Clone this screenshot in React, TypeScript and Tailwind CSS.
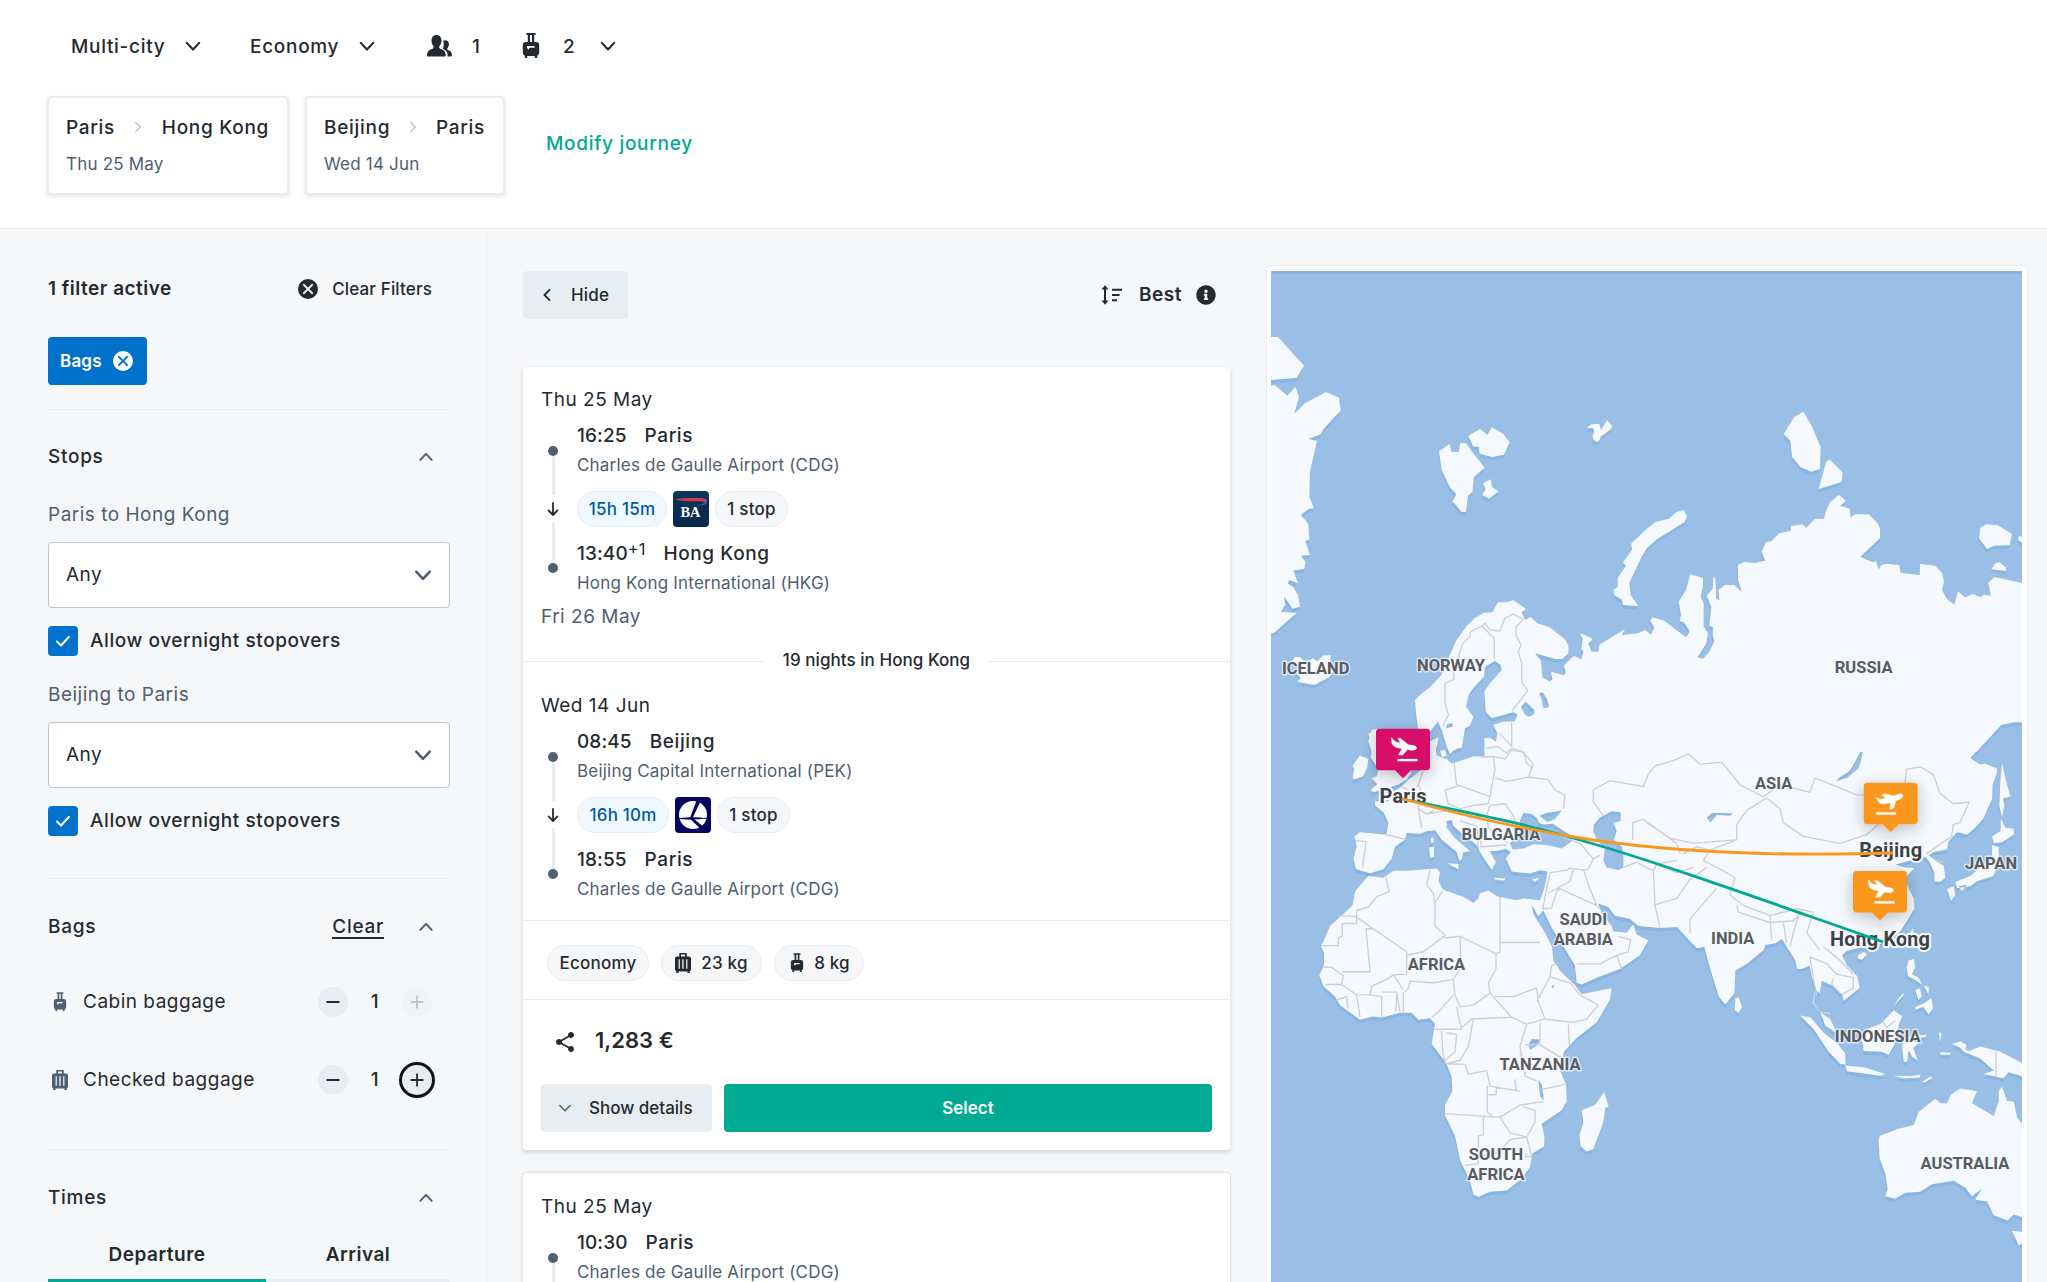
import React from "react";
import { FaInfoCircle } from "react-icons/fa";
import { MdShare } from "react-icons/md";

const t20 = "text-[19px] tracking-[0.5px] leading-none whitespace-nowrap";
const t20m = "text-[19px] font-medium tracking-[0.7px] leading-none whitespace-nowrap";
const t17 = "text-[17px] tracking-[0.2px] leading-none whitespace-nowrap";

function Chevron({ dir = "down", size = 24, w = 2.3, className = "" }: { dir?: "down" | "up" | "left" | "right"; size?: number; w?: number; className?: string }) {
  const d = {
    down: "M5.2 8.6 12 15.8 18.8 8.6",
    up: "M5.2 15.4 12 8.2 18.8 15.4",
    left: "M15.4 5.2 8.6 12 15.4 18.8",
    right: "M8.6 5.2 15.4 12 8.6 18.8",
  }[dir];
  return (
    <svg width={size} height={size} viewBox="0 0 24 24" className={`shrink-0 ${className}`} fill="none" stroke="currentColor" strokeWidth={w} strokeLinecap="round" strokeLinejoin="round">
      <path d={d} />
    </svg>
  );
}

function CabinBag({ width = 24, height = 26, className = "" }) {
  return (
    <svg width={width} height={height} viewBox="0 0 24 26" className={`shrink-0 ${className}`} fill="currentColor">
      <path
        fillRule="evenodd"
        d="M7.5 0h9v2h-1.300v7H17a3.200 3.200 0 0 1 3.200 3.200v7.600a3.200 3.200 0 0 1-2 3V25h-2.400v-2H8.200v2H5.800v-2.200a3.200 3.200 0 0 1-2-3v-7.600A3.200 3.200 0 0 1 7 9h1.800V2H7.500zM11 2v7h2V2zM8 13v1.800l1.300 2 1.300-2h4.900V13z"
      />
    </svg>
  );
}

function CheckedBag({ className = "" }) {
  return (
    <svg width="16" height="20" viewBox="0 0 16 20" className={`shrink-0 ${className}`} fill="currentColor">
      <path
        fillRule="evenodd"
        d="M4.300 0h7.400v3.600H14a2 2 0 0 1 2 2V16.500a2 2 0 0 1-1.200 1.800V20h-2.300v-1.500h-9V20H1.200v-1.700A2 2 0 0 1 0 16.500V5.600a2 2 0 0 1 2-2h2.300zM6 1.500v2.100h4V1.500zM3.600 6.200v9.600h1.200V6.200zM7.300 6.200v9.600h1.300V6.200zM11.200 6.200v9.600h1.200V6.200z"
      />
    </svg>
  );
}

function People() {
  return (
    <svg width="26" height="22" viewBox="0 0 26 22" className="shrink-0" fill="currentColor">
      <path d="M9.500 0c3.200 0 5 2.300 5 5.600 0 2.400-.9 4.400-2.200 5.600-.3 1.500.2 2.300 1.700 2.900 3.300 1.300 4.700 2.700 4.700 6.100 0 .9-.6 1.400-1.500 1.400H1.500C.6 21.600 0 21.100 0 20.200c0-3.400 1.500-4.800 4.800-6.100 1.500-.6 2-1.400 1.700-2.900C5.300 10 4.500 8 4.500 5.600 4.500 2.300 6.300 0 9.500 0z" />
      <path d="M18.300 5.200c2.300 0 3.600 1.600 3.600 4 0 1.700-.6 3.200-1.600 4-.2 1 .1 1.700 1.200 2.100 2.400 1 3.400 2.200 3.400 4.800 0 .9-.4 1.500-1.300 1.500h-3c.2-3.800-1-6.100-4.800-7.800.9-1.400 1.300-4 .5-7.700.5-.6 1.200-.9 2-.9z" />
    </svg>
  );
}

function CloseCircle({ bg, fg }: { bg: string; fg: string }) {
  return (
    <svg width="20" height="20" viewBox="0 0 20 20" className="shrink-0">
      <circle cx="10" cy="10" r="10" fill={bg} />
      <path d="M5.900 5.900 14.100 14.100M14.100 5.900 5.900 14.100" stroke={fg} strokeWidth="2" strokeLinecap="round" />
    </svg>
  );
}

function JourneyCard({ from, to, date, className }: { from: string; to: string; date: string; className: string }) {
  return (
    <div className={`h-[99px] rounded border-2 border-[#e8edf1] bg-white pr-[18px] pl-[17px] pt-[11px] shadow-[0_2px_4px_rgba(37,42,49,0.12)] ${className}`}>
      <div className={`flex h-9 items-center justify-between ${t20m}`}>
        <span>{from}</span>
        <Chevron dir="right" size={16} w={2.400} className="text-[#bac7d5]" />
        <span>{to}</span>
      </div>
      <div className={`mt-[7px] flex h-6 items-center text-[#4f5e71] ${t17}`}>{date}</div>
    </div>
  );
}

function Select() {
  return (
    <div className={`flex h-[66px] items-center justify-between rounded border border-[#bac7d5] bg-white pr-[14px] pl-[17px] ${t20}`}>
      <span className="pb-0.5">Any</span>
      <Chevron className="text-[#4f5e71]" w={2.500} />
    </div>
  );
}

function Overnight() {
  return (
    <div className="mt-[18px] flex h-[30px] items-center gap-3">
      <span className="flex size-[30px] items-center justify-center rounded bg-[#0172cb]">
        <svg width="16" height="14" viewBox="0 0 16 14" fill="none" stroke="white" strokeWidth="2" strokeLinecap="round" strokeLinejoin="round">
          <path d="M2 7.500 6 11.500 14 2.800" />
        </svg>
      </span>
      <span className={`pb-0.5 ${t20m} tracking-[0.57px]`}>Allow overnight stopovers</span>
    </div>
  );
}

function Stepper({ icon, label, mt, ring }: { icon: React.ReactNode; label: string; mt: string; ring?: boolean }) {
  return (
    <div className={`flex h-12 items-center ${mt} ${t20}`}>
      <span className="flex w-6 justify-center text-[#4f5e71]">{icon}</span>
      <span className="ml-[11px] flex-1 pb-0.5">{label}</span>
      <span className="flex size-[30px] items-center justify-center rounded-full bg-[#e8edf1]">
        <svg width="14" height="14" viewBox="0 0 14 14" stroke="#252a31" strokeWidth="2"><path d="M.5 7h13" /></svg>
      </span>
      <span className="w-[54px] pb-0.5 text-center font-medium">1</span>
      <span className={`mr-[18px] flex size-[30px] items-center justify-center rounded-full ${ring ? "bg-[#e8edf1] shadow-[0_0_0_3px_#101418]" : "bg-[#f1f4f7]"}`}>
        <svg width="14" height="14" viewBox="0 0 14 14" stroke={ring ? "#252a31" : "#b6bbc1"} strokeWidth={ring ? 1.800 : 1.500}><path d="M.5 7h13M7 .5v13" /></svg>
      </span>
    </div>
  );
}

function SectionHead({ title, clear }: { title: string; clear?: boolean }) {
  return (
    <div className={`flex h-12 items-center ${t20m}`}>
      <span className="flex-1 pb-px">{title}</span>
      {clear && <span className="mr-[32px] border-b-2 border-[#252a31] pt-[2px] pb-px">Clear</span>}
      <Chevron dir="up" size={20} w={2.300} className="mr-[14px] text-[#4f5e71]" />
    </div>
  );
}

function Sidebar() {
  return (
    <aside className="w-[487px] shrink-0 border-r border-[#e8edf1] pt-9 pr-9 pl-12">
      <div className="flex h-12 items-center">
        <span className={`flex-1 pb-0.5 ${t20} text-[18.5px] font-semibold tracking-[0.2px]`}>1 filter active</span>
        <CloseCircle bg="#252a31" fg="#f5f7f9" />
        <span className={`mr-[18px] ml-[14px] font-medium ${t17} tracking-[0.15px]`}>Clear Filters</span>
      </div>
      <div className={`mt-6 flex h-12 w-[99px] items-center justify-between rounded bg-[#0172cb] pr-[14px] pl-3 text-white ${t17} font-semibold tracking-[-0.6px]`}>
        Bags
        <CloseCircle bg="#ffffff" fg="#0172cb" />
      </div>
      <div className="mt-6 mb-[23px] h-px bg-[#e8edf1]" />
      <SectionHead title="Stops" />
      <div className={`flex h-[61px] items-center pt-1.5 text-[#4f5e71] ${t20}`}>Paris to Hong Kong</div>
      <Select />
      <Overnight />
      <div className={`flex h-[66px] items-center pt-[11px] text-[#4f5e71] ${t20}`}>Beijing to Paris</div>
      <Select />
      <Overnight />
      <div className="mt-[42px] mb-6 h-px bg-[#e8edf1]" />
      <SectionHead title="Bags" clear />
      <Stepper mt="mt-[27px]" icon={<CabinBag width={18} height={20} />} label="Cabin baggage" />
      <Stepper mt="mt-[30px]" icon={<CheckedBag />} label="Checked baggage" ring />
      <div className="mt-[45px] mb-6 h-px bg-[#e8edf1]" />
      <SectionHead title="Times" />
      <div className={`mt-2 flex font-semibold ${t20}`}>
        <div className="flex h-[52px] w-[218px] items-center justify-center border-b-3 border-[#00a991]">Departure</div>
        <div className="flex h-[52px] flex-1 items-center justify-center border-b-3 border-[#e8edf1]">Arrival</div>
      </div>
    </aside>
  );
}

function Pill({ children, blue, className = "" }: { children: React.ReactNode; blue?: boolean; className?: string }) {
  return (
    <span className={`flex h-9 items-center justify-center rounded-full border font-medium ${t17} tracking-[-0.1px] ${blue ? "border-[#def0fc] bg-[#f0f8ff] text-[#005aa3]" : "border-[#e8edf1] bg-[#f5f7f9]"} ${className}`}>
      {children}
    </span>
  );
}

function BritishAirways() {
  return (
    <svg width="36" height="36" viewBox="0 0 36 36">
      <defs>
        <linearGradient id="ba" x1="0" y1="0" x2="0" y2="1">
          <stop offset="0" stopColor="#0c3560" />
          <stop offset="1" stopColor="#062748" />
        </linearGradient>
      </defs>
      <rect width="36" height="36" rx="4" fill="url(#ba)" />
      <path d="M2 8.400C10 6.600 24 7 30 7.200c3 .2 4.200 1.400 4 4.200C31.500 9.500 14 11.500 2 8.400z" fill="#d93a45" />
      <path d="M34.200 10.500c-.2 3-4 4.200-11 4.300 4-1 7.500-2 9-4.300z" fill="#2a62b4" />
      <text x="17.500" y="26" textAnchor="middle" fill="white" fontFamily="Liberation Serif" fontWeight="700" fontSize="14.500" textLength="20" lengthAdjust="spacingAndGlyphs">BA</text>
    </svg>
  );
}

function LotAirlines() {
  return (
    <svg width="36" height="36" viewBox="0 0 36 36">
      <rect width="36" height="36" rx="4" fill="#040360" />
      <circle cx="18" cy="18" r="14" fill="white" />
      <path d="M21.500 3.800 25 5.200 18 20.200 26 20.600v1.700h-6.500l8 6.600-2.600 2.300L16 22.800 4 22v-1l11.200-.8z" fill="#040360" />
      <path d="M26 21.300h6" stroke="#040360" strokeWidth="1" />
    </svg>
  );
}

type Stop = { time: string; plus?: string; city: string; airport: string };

function Place({ s }: { s: Stop }) {
  return (
    <>
      <div className={`flex h-9 items-center font-medium ${t20}`}>
        <span className="tracking-[0.1px]">{s.time}</span>
        {s.plus && <span className="-mt-2 text-[16.5px] font-normal tracking-normal">{s.plus}</span>}
        <span className="ml-[18px] tracking-[0.6px]">{s.city}</span>
      </div>
      <div className={`flex h-6 items-center text-[#4f5e71] ${t17}`}>{s.airport}</div>
    </>
  );
}

function Dot() {
  return <span className="size-2.5 shrink-0 rounded-full bg-[#4f5e71]" />;
}

function Segment({ from, to, duration, durationW, logo }: { from: Stop; to: Stop; duration: string; durationW: string; logo: React.ReactNode }) {
  return (
    <div className="flex h-[178px]">
      <div className="flex w-9 flex-col items-center pt-[29px] pr-3 text-[#252a31]">
        <Dot />
        <span className="h-[39px] w-[3px] shrink-0 bg-[#e8edf1]" />
        <svg width="14" height="27" viewBox="0 0 14 27" className="shrink-0" fill="none" stroke="currentColor" strokeWidth="1.800" strokeLinecap="round" strokeLinejoin="round">
          <path d="M7 8v11.500M2.500 15.400 7 20l4.500-4.600" />
        </svg>
        <span className="h-[41px] w-[3px] shrink-0 bg-[#e8edf1]" />
        <Dot />
      </div>
      <div>
        <Place s={from} />
        <div className="mt-[14px] mb-2 flex gap-1.5">
          <Pill blue className={durationW}>{duration}</Pill>
          {logo}
          <Pill className="w-[73px]">1 stop</Pill>
        </div>
        <Place s={to} />
      </div>
    </div>
  );
}

const cdg = "Charles de Gaulle Airport (CDG)";

function Results() {
  const card = "rounded bg-white";
  return (
    <main className="w-[743px] shrink-0 pt-[42px] pl-9">
      <div className="flex h-12 items-center">
        <button className={`flex h-12 w-[105px] items-center rounded bg-[#e8edf1] pl-[15px] font-medium ${t17}`}>
          <Chevron dir="left" size={18} w={2.400} />
          <span className="ml-[15px]">Hide</span>
        </button>
        <div className="flex-1" />
        <svg width="22" height="20" viewBox="0 0 22 20" fill="none" stroke="#252a31" strokeWidth="2">
          <path d="M4 3v14M11 4.800h10M11 10h7.500M11 15.200h5" />
          <path d="M4 .3 7.500 4.600H.5zM4 19.700 7.500 15.400H.5z" fill="#252a31" stroke="none" />
        </svg>
        <span className={`ml-[16px] pb-px font-semibold ${t20} tracking-[0.1px]`}>Best</span>
        <FaInfoCircle size={20} className="mr-[14px] ml-[14px]" />
      </div>

      <article className={`${card} mt-12 h-[783px] shadow-[0_2px_4px_rgba(37,42,49,0.18)]`}>
        <div className="px-[18px] pt-[14px]">
          <div className={`flex h-9 items-center ${t20}`}>Thu 25 May</div>
          <Segment
            from={{ time: "16:25", city: "Paris", airport: cdg }}
            to={{ time: "13:40", plus: "+1", city: "Hong Kong", airport: "Hong Kong International (HKG)" }}
            duration="15h 15m"
            durationW="w-[90px]"
            logo={<BritishAirways />}
          />
          <div className={`flex h-[42px] items-center text-[#4f5e71] ${t20}`}>Fri 26 May</div>
        </div>
        <div className={`flex h-12 items-center gap-[18px] font-medium ${t17}`}>
          <span className="h-px flex-1 bg-[#e8edf1]" />
          <span className="pb-0.5 tracking-[0.05px]">19 nights in Hong Kong</span>
          <span className="h-px flex-1 bg-[#e8edf1]" />
        </div>
        <div className="px-[18px] pt-[2px] pb-[19px]">
          <div className={`flex h-9 items-center ${t20}`}>Wed 14 Jun</div>
          <Segment
            from={{ time: "08:45", city: "Beijing", airport: "Beijing Capital International (PEK)" }}
            to={{ time: "18:55", city: "Paris", airport: cdg }}
            duration="16h 10m"
            durationW="w-[92px]"
            logo={<LotAirlines />}
          />
        </div>
        <div className="flex h-[79px] gap-3 border-t border-[#e8edf1] px-6 pt-6">
          <Pill className="w-[102px]">Economy</Pill>
          <Pill className="w-[101px] gap-2.5"><CheckedBag />23 kg</Pill>
          <Pill className="w-[90px] gap-2"><CabinBag width={18} height={20} />8 kg</Pill>
        </div>
        <div className="border-t border-[#e8edf1] px-[18px] pt-[16px]">
          <div className="flex h-12 items-center pl-3">
            <MdShare size={24} className="mt-1" />
            <span className="ml-[18px] text-[22px] leading-none font-semibold">1,283 €</span>
          </div>
          <div className={`mt-5 flex gap-3 font-medium ${t17} tracking-normal`}>
            <button className="flex h-12 w-[171px] items-center rounded bg-[#e8edf1] pl-[15px]">
              <Chevron size={18} w={2} className="text-[#4f5e71]" />
              <span className="ml-[15px]">Show details</span>
            </button>
            <button className="h-12 flex-1 rounded bg-[#00a991] font-semibold tracking-normal text-white">Select</button>
          </div>
        </div>
      </article>

      <article className={`${card} mt-[23px] h-[140px] px-[18px] pt-[15px] shadow-[0_0_3px_rgba(37,42,49,0.25)]`}>
        <div className={`flex h-9 items-center ${t20}`}>Thu 25 May</div>
        <div className="flex">
          <div className="flex w-9 flex-col items-center pt-[29px] pr-3">
            <Dot />
            <span className="h-[39px] w-[3px] shrink-0 bg-[#e8edf1]" />
          </div>
          <div>
            <Place s={{ time: "10:30", city: "Paris", airport: cdg }} />
          </div>
        </div>
      </article>
    </main>
  );
}

/* Coastlines. Northern and southern halves use their own drawing scale. */
const north = [
  "M0 261 54 261 132 347 110 384 0 393z",
  "M0 405 45 406 82 437 106 411 117 440 103 491 135 460 198 426 237 443 242 482 191 536 183 553 145 567 171 572 150 665 148 740 162 775 145 777 123 795 145 822 148 868 136 873 150 915 123 917 137 937 133 957 100 961 114 1000 88 990 83 1000 100 1012 114 1036 120 1070 98 1076 72 1039 76 1064 63 1085 110 1089 75 1120 45 1147 0 1160z",
  "M537 604 569 582 574 606 596 606 601 579 618 579 636 605 674 653 642 681 637 726 624 738 618 786 605 786 578 754 589 733 569 711 545 660z",
  "M625 557 661 537 682 555 696 532 730 552 749 577 732 614 696 621 659 611 657 591 639 589z",
  "M669 700 692 688 696 711 716 724 687 746 667 735 676 718z",
  "M980 533 995 523 1018 521 1023 541 1029 530 1041 511 1058 529 1050 540 1022 560 1020 570 1010 577 999 568 998 556 1003 546 1000 535z",
  "M1114 880 1161 836 1186 816 1227 806 1248 787 1271 780 1281 799 1274 816 1191 868 1161 895 1145 920 1122 970 1108 1000 1112 1035 1135 1068 1089 1065 1086 1049 1063 1036 1060 1020 1073 1010 1073 983 1098 947 1089 937 1116 900z",
  "M97 1232 105 1221 120 1222 132 1232 148 1232 158 1224 172 1234 190 1216 212 1216 210 1250 218 1265 208 1282 163 1305 112 1296 122 1284 104 1262 120 1250z",
  "M475 1445 468 1390 465 1350 480 1335 513 1309 545 1274 560 1235 590 1170 620 1128 645 1104 672 1088 697 1087 714 1057 740 1057 760 1050 798 1077 785 1087 795 1110 812 1101 832 1120 868 1131 915 1168 925 1187 925 1210 907 1227 885 1227 825 1210 843 1232 847 1282 870 1295 877 1288 873 1265 912 1276 917 1268 912 1246 942 1218 964 1228 970 1205 964 1197 968 1168 960 1150 994 1163 997 1170 985 1180 994 1205 1015 1205 1018 1184 1095 1137 1086 1155 1135 1150 1155 1140 1173 1154 1183 1133 1171 1112 1177 1102 1212 1112 1279 1162 1289 1144 1272 1117 1259 1114 1263 1095 1256 1055 1278 1020 1291 973 1329 984 1329 1010 1322 1040 1331 1060 1331 1130 1344 1150 1339 1180 1313 1222 1329 1226 1348 1205 1363 1174 1358 1155 1359 1132 1348 1127 1354 1072 1340 1037 1358 1017 1360 981 1366 985 1369 1047 1378 1050 1375 1020 1396 1005 1423 1005 1445 1026 1434 990 1434 944 1453 936 1484 939 1515 932 1505 905 1518 877 1534 874 1558 850 1592 842 1594 828 1627 823 1639 833 1665 807 1692 806 1698 783 1710 757 1736 735 1758 752 1741 767 1769 776 1772 803 1785 793 1826 793 1853 820 1860 835 1860 865 1801 920 1837 937 1848 934 1856 959 1863 946 1881 941 1918 946 1922 969 1979 975 1980 942 2026 947 2046 970 2052 995 2046 1020 2061 1048 2083 1064 2094 1024 2115 1042 2139 1032 2162 1042 2171 1034 2192 1037 2185 998 2203 981 2310 1004 2310 1418 2264 1417 2224 1425 2150 1505 673 1505 673 1465 690 1463 708 1475 712 1450 700 1424 730 1415 765 1414 772 1393 760 1387 695 1405 677 1385 673 1325 690 1300 725 1260 722 1245 705 1233 675 1250 672 1280 640 1315 627 1333 618 1370 640 1400 630 1427 615 1435 610 1465 605 1495 588 1495 570 1512 560 1490 545 1440 534 1415 505 1452 495 1470z",
  "M510 1505 508 1475 535 1462 532 1485 525 1505z",
  "M1571 553 1602 502 1630 485 1654 526 1682 592 1680 657 1654 665 1621 651 1596 620 1591 572z",
  "M1676 717 1698 637 1709 628 1748 668 1745 696z",
  "M2157 865 2161 833 2179 823 2213 826 2256 852 2249 886 2202 887 2181 897z",
  "M2274 870 2277 858 2310 865 2310 895z",
  "M2194 958 2205 941 2218 936 2238 953 2238 963z",
  "M325 1475 335 1440 350 1437 400 1440 400 1505 335 1505z",
  "M783 1370 797 1355 823 1380 820 1395 805 1400 795 1395zM838 1330 848 1327 862 1350 867 1372 850 1375 845 1350zM558 1435 562 1422 578 1420 578 1430z",
].join("");

const south = [
  "M673 26 2155 26 2131 53 2161 72 2173 68 2211 82 2211 95 2198 130 2196 172 2169 230 2146 255 2121 275 2091 268 2066 295 2061 318 2021 325 2006 335 2026 350 2051 365 2056 400 2041 412 2023 410 2023 385 2006 350 1996 340 1971 345 1931 355 1906 362 1936 370 1963 372 1943 393 1936 410 1961 460 1963 490 1948 515 1921 555 1896 575 1861 592 1811 600 1761 612 1746 625 1761 655 1791 685 1799 720 1751 758 1746 740 1721 715 1686 700 1679 735 1666 725 1661 765 1686 795 1711 810 1729 848 1736 855 1696 830 1681 790 1659 765 1666 720 1656 690 1649 655 1626 665 1611 665 1606 640 1586 610 1566 578 1546 590 1516 595 1511 610 1461 650 1426 670 1423 735 1396 768 1376 745 1346 650 1333 600 1311 605 1286 580 1251 543 1200 546 1135 540 1110 520 1065 510 1045 485 1015 475 1025 505 1055 540 1060 555 1100 560 1120 535 1130 565 1165 582 1140 625 1080 665 1010 690 965 710 950 705 945 655 905 590 875 545 850 495 835 512 815 478 820 505 855 560 876 600 880 640 900 670 945 712 965 738 1055 720 1050 755 1010 820 950 865 912 905 900 960 918 1000 920 1050 905 1075 845 1115 853 1150 852 1180 818 1200 810 1240 785 1275 740 1308 690 1312 655 1327 640 1320 630 1280 600 1220 585 1150 555 1090 555 1060 577 1020 575 980 560 940 515 883 525 825 510 808 475 812 455 792 420 792 365 806 340 803 300 812 240 770 225 745 190 715 178 683 192 655 192 620 183 598 195 575 210 540 250 505 278 480 285 440 325 395 370 400 400 380 440 380 530 373 540 385 535 410 550 435 610 455 640 473 655 460 660 445 685 438 715 455 770 465 790 460 840 465 850 440 860 400 862 382 840 378 810 388 755 382 738 345 752 325 737 316 712 322 690 322 707 355 695 378 660 325 650 305 610 275 580 250 575 232 560 235 560 255 585 285 630 322 610 327 606 345 598 352 590 325 545 290 525 262 500 265 480 272 440 270 435 290 405 310 395 345 370 375 330 387 288 375 280 345 290 310 283 280 300 268 380 275 385 240 370 210 345 190 345 178 385 178 400 150 425 135 445 115 460 105 490 80 508 50 508 26 527 26 530 45 560 55 575 68 640 48 673 48z",
  "M325 -20 400 -20 400 0 440 60 455 95 440 115 415 130 385 138 340 152 332 145 352 128 335 112 350 105 355 90 345 70 332 50 338 20z",
  "M278 112 282 85 278 75 300 45 325 55 322 80 310 105 283 115z",
  "M508 312 522 310 522 338 510 344zM513 285 521 283 520 298 514 300zM562 358 596 360 594 375zM703 400 735 402 733 408 705 405zM815 405 838 400 825 412zM540 32 555 28 560 45 547 50z",
  "M556 0 610 0 598 22 575 34 566 30z",
  "M1033 1022 1046 1065 1036 1068 1030 1110 1000 1188 980 1195 962 1180 958 1150 970 1110 965 1075 1005 1060z",
  "M1426 750 1436 748 1446 775 1436 793 1424 785zM1794 625 1811 615 1821 622 1806 638 1794 635zM1946 570 1958 547 1961 560 1953 590z",
  "M1946 640 1961 636 1966 660 1956 680 1976 690 1986 710 1966 697 1944 686 1940 660zM1966 725 1980 722 1985 745 1975 755zM1992 712 2006 718 2005 740zM1966 775 1991 765 2014 750 2019 780 2006 797 1990 775 1966 783zM1901 772 1920 745 1933 733 1930 742z",
  "M1826 838 1861 825 1901 785 1926 802 1916 830 1906 880 1886 915 1866 905 1811 903 1806 870z",
  "M1621 800 1651 805 1691 850 1731 880 1756 910 1756 942 1741 940 1706 905 1661 840zM1756 945 1811 950 1876 970 1861 975 1761 962z",
  "M1900 975 1950 976 1981 972 1980 980 1930 982zM1986 992 2010 978 2019 980 1995 994zM1926 890 1932 868 1951 862 2001 855 1996 862 1951 872 1976 880 1960 895 1973 930 1956 920 1946 900 1941 935 1931 935zM2036 848 2045 852 2040 878zM2041 907 2073 908 2070 914 2042 913z",
  "M2076 883 2101 875 2119 885 2116 900 2130 902 2161 890 2221 905 2271 930 2310 950 2310 990 2281 975 2246 965 2231 982 2171 970 2201 960 2161 925 2111 905 2100 893z",
  "M2223 228 2236 255 2261 258 2261 275 2226 297 2201 300 2196 280 2221 265zM2196 305 2216 310 2216 350 2201 395 2151 410 2131 425 2091 430 2086 412 2131 395 2161 370 2196 350zM2061 433 2081 425 2086 450 2073 468zM2096 425 2121 420 2106 440z",
  "M2226 65 2236 110 2251 165 2229 170 2233 190 2226 225 2218 190 2221 120z",
  "M1856 1165 1859 1150 1911 1130 1961 1118 1976 1080 2026 1042 2041 1055 2061 1055 2073 1030 2101 1012 2151 1020 2136 1055 2201 1092 2216 1050 2216 1020 2226 1007 2241 1048 2261 1050 2271 1095 2286 1115 2310 1120 2310 1395 2276 1382 2261 1378 2243 1395 2201 1380 2181 1340 2146 1335 2166 1303 2136 1325 2116 1300 2081 1280 2016 1290 1981 1312 1936 1315 1906 1332 1876 1325 1883 1305 1876 1260 1859 1215zM2256 1425 2310 1430 2310 1450 2276 1468z",
  /* inland water */
  "M780 265 780 235 790 212 815 215 832 228 836 240 850 245 878 243 930 275 935 295 905 315 860 305 820 303 790 315 758 318 750 300zM838 220 860 212 905 205 885 230 862 238z",
  "M1020 225 1055 207 1082 210 1082 235 1060 240 1070 265 1062 290 1085 310 1090 330 1090 370 1075 378 1040 370 1030 350 1035 315 1010 290 1000 265 1002 245z",
  "M805 885 815 868 838 870 835 885 810 900zM835 985 845 1000 852 1045 840 1035zM778 900 782 930 800 975 788 955zM874 714 884 712 878 722z",
  "M1341 225 1356 212 1418 213 1411 220 1371 218 1351 240zM1809 32 1803 60 1796 82 1761 110 1729 119 1736 110 1769 90 1786 62 1801 35z",
].join("");

const northBorders =
  "M548 1430 565 1395 555 1360 555 1300 582 1288 580 1260 595 1220 608 1180 630 1160 632 1145 665 1128 675 1120 690 1140 720 1143 735 1105 760 1092 790 1108 768 1130 768 1155 783 1185 775 1205 785 1240 785 1295 803 1322 755 1385M665 1128 703 1165 703 1225M755 1415 755 1490 720 1450M755 1495 740 1510 715 1490 675 1495M755 1495 790 1505 800 1540 820 1555";

const southBorders =
  "M665 50 700 48 705 85 690 165M755 30 735 55 700 48M755 30 790 35 820 70 805 108 740 120 705 110M805 108 865 115 885 145 915 160 910 200M582 65 590 130 635 145 690 165 685 185 640 190 600 200 565 185 555 145 590 135M490 90 475 130 485 150 475 200 500 215 560 205 600 200 630 225 680 220 690 190M475 200 485 255 M500 215 520 205M380 275 435 288M285 292 318 295 308 370M690 190 735 185 760 220 770 255M680 220 685 255 745 300M600 235 650 250 665 305 660 315M650 250 655 315M665 310 740 305M425 135 455 150 475 130" +
  "M870 385 920 378 930 372 970 378 985 375 1000 345 960 300 905 280M940 375 930 410 865 445M970 375 985 420 1010 480M895 430 1010 480 1018 490M870 385 848 490 875 488 885 455 895 430M950 650 1020 650 1070 625 1105 615 1112 580 1075 570M1070 625 1085 665M960 300 1000 345 1020 335M1090 370 1130 355 1180 380 1185 480 1200 545M1180 380 1190 360 1250 350" +
  "M378 400 388 440 350 455 325 485 290 495 290 515 440 615 440 625M290 515 290 533 247 533 247 570 235 575 235 597 183 597M235 510 290 512M318 548 340 548 290 515M318 548 330 673 245 673M510 378 500 420 520 445 525 480 525 540 555 568 490 615 440 625 440 680 400 682 380 695 335 715 330 740M548 438 523 475M720 455 720 615 708 620 600 570 555 575M720 588 840 588M600 570 603 660 580 695 520 705 450 700 445 720 430 735 430 790M708 620 708 665 685 705 690 735 640 770 600 775 585 740 580 695M690 735 755 805 635 810 600 840 525 840M192 660 215 660 250 685 245 710 195 710M245 710 290 740 300 805M230 755 260 745 265 780M295 740 330 740 365 745 365 805M365 732 410 732 420 790M400 682 430 725M410 740 408 790M580 740 540 785 515 805M590 775 605 840" +
  "M545 845 548 905 555 940M560 850 590 855 585 905 555 930M640 810 625 890 600 930 560 940 615 942 625 970 680 960 690 1005 780 1020M705 745 760 745 830 720 835 760 855 810 940 820 980 810 1015 770 960 740 930 705 870 688 830 760M870 688 875 655 895 648M755 805 800 825 780 890 795 975 830 990M840 820 840 885 900 920M795 885 835 885M925 825 928 885M800 825 855 810M555 1085 640 1090 700 1095 720 1095 780 1060 850 1050M682 1005 682 1080 700 1095M670 1095 670 1145 655 1150 655 1230 615 1235M720 1095 750 1140 800 1153 825 1110 825 1075 790 1065M800 1153 815 1210 797 1210 800 1200M655 1210 720 1195 750 1160 800 1153M765 985 770 1020M845 1015 915 1000M710 1005 708 1030 685 1030M1118 290 1118 240 1150 230 1250 300 1260 330" +
  "M1030 220 1000 180 1000 145 1050 118 1150 135 1165 100 1185 75 1240 60 1285 40 1320 70 1385 65 1440 130 1510 165 1560 130 1650 152 1665 110 1740 140 1790 160 1930 155 1940 85 1980 78 2020 100 2040 155 2080 185 2128 180 2100 240 2080 245 2075 280 2000 330M1520 168 1460 205 1430 245 1430 290 1350 320 1330 350 1380 375 1425 400 1410 450 1450 480 1530 510 1610 490 1660 500 1640 560 1680 610M1520 168 1560 200 1570 240 1630 280 1740 300 1820 275 1860 240 1900 225M1161 240 1230 285 1300 300 1425 290M1270 330 1310 310 1350 320M1161 350 1250 385 1300 370M1180 480 1250 460 1290 405 1340 370M1290 560 1290 520 1370 430M1430 480 1435 500 1530 530 1600 525 1630 495M1530 510 1535 580M1570 530 1580 590M1620 495 1600 560 1590 600M1650 630 1660 690 1670 740M1650 630 1700 650 1730 680 1780 690 1780 720 1745 740M1690 600 1740 640 1780 680M1720 690 1715 710 1740 735M2026 350 2050 355M2208 905 2208 980M1680 790 1710 795M1866 815 1880 835 1905 815";

const labels: [string, number, number][] = [
  ["ICELAND", 1315.700, 674], ["NORWAY", 1451, 671], ["RUSSIA", 1863.700, 673], ["ASIA", 1773.700, 788.500],
  ["BULGARIA", 1501, 840], ["SAUDI", 1583.300, 925], ["ARABIA", 1583.300, 944.500], ["AFRICA", 1436.500, 970],
  ["TANZANIA", 1540, 1070], ["SOUTH", 1496, 1160], ["AFRICA", 1496, 1180], ["INDIA", 1732.700, 944],
  ["JAPAN", 1991, 869], ["INDONESIA", 1877.700, 1042], ["AUSTRALIA", 1965, 1169],
];

const landing =
  "M9.680 13.270l4.350 1.160 5.310 1.420c.8.210 1.620-.26 1.840-1.060.210-.8-.26-1.620-1.060-1.840l-5.310-1.420-2.760-9.020L10.120 2v8.280L5.150 8.950l-.93-2.320-1.450-.39v5.170l1.600.430 5.310 1.430z";
const takeoff =
  "M22.070 9.640c-.21-.8-1.040-1.280-1.840-1.060L14.920 10l-6.900-6.430-1.930.51 4.140 7.170-4.970 1.330-1.970-1.540-1.450.39 1.820 3.160.77 1.330 1.600-.43 5.310-1.420 4.350-1.160L21 11.490c.81-.23 1.280-1.050 1.070-1.850z";

/* Planes seen from above: a tapered fuselage with both wings and a tail fin. */
const landingPlane =
  "M-12.300 -12.500 -9.500 -9.200 -7.800 -8.300 -3 -7.200 -6 -11.800 -3.200 -11.800 4.500 -5.400 9.800 -4.600C12.500 -4 13 -2.600 12.300 -1.200 11 .2 8.500 .2 3.800 -.6L-1.200 4.700H-5.200L-1.800 -1.400 -7.500 -3C-10.500 -4 -11.800 -6 -12 -8z";

function Pin({ x, y, color, kind, name, width }: { x: number; y: number; color: string; kind: "landing" | "takeoff"; name: string; width: number }) {
  return (
    <g transform={`translate(${x} ${y})`}>
      <g filter="url(#pin-shadow)">
        <path d="M-23.500 0h47a3.500 3.500 0 0 1 3.500 3.500v34.500a3.500 3.500 0 0 1-3.500 3.500H8L0 49.500-8 41.500h-15.500a3.500 3.500 0 0 1-3.500-3.500V3.500A3.500 3.500 0 0 1-23.500 0z" fill={color} />
      </g>
      <g fill="white" stroke="white" strokeLinejoin="round">
        {kind === "landing" ? (
          <g>
            <path d={landingPlane} transform="translate(.8 21.500)" strokeWidth=".6" />
            <path d="M-5.500 30.200h20v2.400h-20z" stroke="none" />
          </g>
        ) : (
          <g>
            <path d={landingPlane} transform="translate(.6 20.500) rotate(-28 0 -3)" strokeWidth=".6" />
            <path d="M-14.500 29.600h20v2.400h-20z" stroke="none" />
          </g>
        )}
      </g>
      <text x="0" y="74.800" textAnchor="middle" fontSize="20" fill="#3f4145" stroke="#f5f8fc" strokeWidth="4" strokeLinejoin="round" paintOrder="stroke" textLength={width}>{name}</text>
    </g>
  );
}

function RouteMap() {
  return (
    <svg width="751" height="1020" viewBox="1271 271 751 1020" className="block">
      <defs>
        <filter id="pin-shadow" x="-60%" y="-60%" width="220%" height="240%">
          <feDropShadow dx="0" dy="4" stdDeviation="7" floodColor="#252a31" floodOpacity="0.28" />
        </filter>
        <g id="land">
          <path d={north} fillRule="evenodd" transform="translate(1260 250) scale(0.33333)" />
          <path d={south} fillRule="evenodd" transform="translate(1260 740) scale(0.33333 0.34439)" />
        </g>
      </defs>
      <rect x="1271" y="271" width="751" height="1020" fill="#99bfe6" />
      <rect x="1271" y="271" width="751" height="3" fill="#89b5e1" />
      <use href="#land" fill="#89b5e1" y="3.500" x="-0.500" />
      <use href="#land" fill="#f5f8fc" />
      <g fill="none" stroke="#cfced8" strokeWidth="4" strokeLinejoin="round">
        <path d={northBorders} transform="translate(1260 250) scale(0.33333)" />
        <path d={southBorders} transform="translate(1260 740) scale(0.33333 0.34439)" />
      </g>
      <g fontFamily="Roboto" fontWeight="700">
        <g fontSize="16.500" fill="#595b5f" stroke="#f5f8fc" strokeOpacity="0.700" strokeWidth="3" strokeLinejoin="round" paintOrder="stroke" textAnchor="middle">
          {labels.map(([t, x, y]) => (
            <text key={t + y} x={x} y={y}>{t}</text>
          ))}
        </g>
        <Pin x={1403} y={728.700} color="#d60b69" kind="landing" name="Paris" width={47} />
        <Pin x={1890.700} y={782.700} color="#fb971e" kind="takeoff" name="Beijing" width={63} />
        <Pin x={1880} y={871} color="#fb971e" kind="landing" name="Hong Kong" width={100} />
      </g>
      <g fill="none" strokeWidth="2.800" strokeLinecap="round">
        <path d="M1403 799C1460 811 1520 822 1587 842 1660 863 1760 899 1882 941.500" stroke="#00a991" />
        <path d="M1403 799C1450 812 1520 829 1593 840 1690 854 1790 856 1892 853" stroke="#fb971e" />
      </g>
    </svg>
  );
}

export default function App() {
  return (
    <div className="flex h-[1282px] w-[2047px] flex-col overflow-hidden bg-[#f5f7f9] font-['Inter',sans-serif] text-[#252a31]">
      <header className="h-[229px] shrink-0 border-b border-[#e8edf1] bg-white pt-[22px]">
        <div className={`flex h-12 items-center pl-[71px] ${t20m}`}>
          <span className="w-[96px]">Multi-city</span>
          <Chevron className="ml-[15px]" size={22} />
          <span className="ml-[46px] w-[90px]">Economy</span>
          <Chevron className="mr-[49px] ml-4" size={22} />
          <People />
          <span className="ml-[19px] w-3">1</span>
          <CabinBag className="ml-[35px]" />
          <span className="ml-5 w-3">2</span>
          <Chevron className="ml-[22px]" size={22} />
        </div>
        <div className="mt-[26px] flex items-center pl-[47px]">
          <JourneyCard className="w-[242px]" from="Paris" to="Hong Kong" date="Thu 25 May" />
          <JourneyCard className="ml-4 w-[200px]" from="Beijing" to="Paris" date="Wed 14 Jun" />
          <span className={`ml-[41px] pb-1 text-[#00a991] ${t20m}`}>Modify journey</span>
        </div>
      </header>
      <div className="flex flex-1 items-start">
        <Sidebar />
        <Results />
        <div className="mt-9 ml-9 w-[762px] rounded border border-[#e8edf1] bg-white px-1 pt-[5px]">
          <RouteMap />
        </div>
      </div>
    </div>
  );
}
